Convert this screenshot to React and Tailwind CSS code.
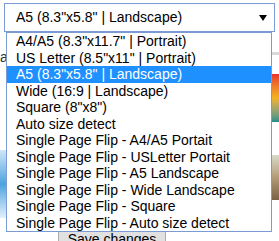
import React from 'react';

const options = [
  'A4/A5 (8.3"x11.7" | Portrait)',
  'US Letter (8.5"x11" | Portrait)',
  'A5 (8.3"x5.8" | Landscape)',
  'Wide (16:9 | Landscape)',
  'Square (8"x8")',
  'Auto size detect',
  'Single Page Flip - A4/A5 Portait',
  'Single Page Flip - USLetter Portait',
  'Single Page Flip - A5 Landscape',
  'Single Page Flip - Wide Landscape',
  'Single Page Flip - Square',
  'Single Page Flip - Auto size detect',
];

export default function App() {
  const selected = 2;

  return (
    <div
      className="relative w-[279px] h-[241px] overflow-hidden bg-white text-black flex flex-col"
      style={{ fontFamily: '"Liberation Sans", Arial, sans-serif' }}
    >
      {/* Select box */}
      <div className="mx-[4px] mt-[3px] h-[29px] shrink-0 border border-[#7a9cd3] bg-white flex items-center pl-[11px] pr-[7px] text-[14px]">
        <span className="flex-1">{options[selected]}</span>
        <svg width="8" height="6" viewBox="0 0 8 6">
          <path d="M0 0h8L4 6z" fill="#000" />
        </svg>
      </div>

      {/* Page behind the open dropdown */}
      <div className="flex-1 flex justify-between">
        <div className="w-[7px] flex flex-col pt-[18px]">
          <span className="text-[14px] leading-none text-[#333]">a</span>
          <div className="mt-[86px] h-[68px] bg-gradient-to-b from-[#cfe6f7] via-[#4aa3df] to-[#e3f1fb]" />
        </div>
        <div className="flex-1 flex flex-col justify-end pl-[51px] -mb-[8px]">
          <div className="w-[108px] h-[20px] border border-[#adadad] bg-[#e1e1e1] text-[14px] leading-[18px] text-center">
            Save changes
          </div>
        </div>
        <div className="w-[7px] flex flex-col pt-[20px]">
          <div className="h-[3px] bg-[#d9d9d9]" />
          <div className="mt-[19px] h-[48px] bg-gradient-to-b from-[#e8322d] via-[#f2b21c] to-[#1e8f8a]" />
          <div className="mt-[33px] h-[45px] bg-gradient-to-b from-[#d7dcc9] via-[#b39b77] to-[#7a6244]" />
        </div>
      </div>

      {/* Open list (menu overlay) */}
      <ul className="absolute left-[6px] top-[32px] w-[266px] border border-[#7a9cd3] bg-white text-[14px]">
        {options.map((opt, i) => (
          <li
            key={opt}
            className={`h-[16.5px] leading-[16.5px] pl-[9px] whitespace-nowrap ${
              i === selected ? 'bg-[#1e90ff] text-white' : ''
            }`}
          >
            {opt}
          </li>
        ))}
      </ul>
    </div>
  );
}
